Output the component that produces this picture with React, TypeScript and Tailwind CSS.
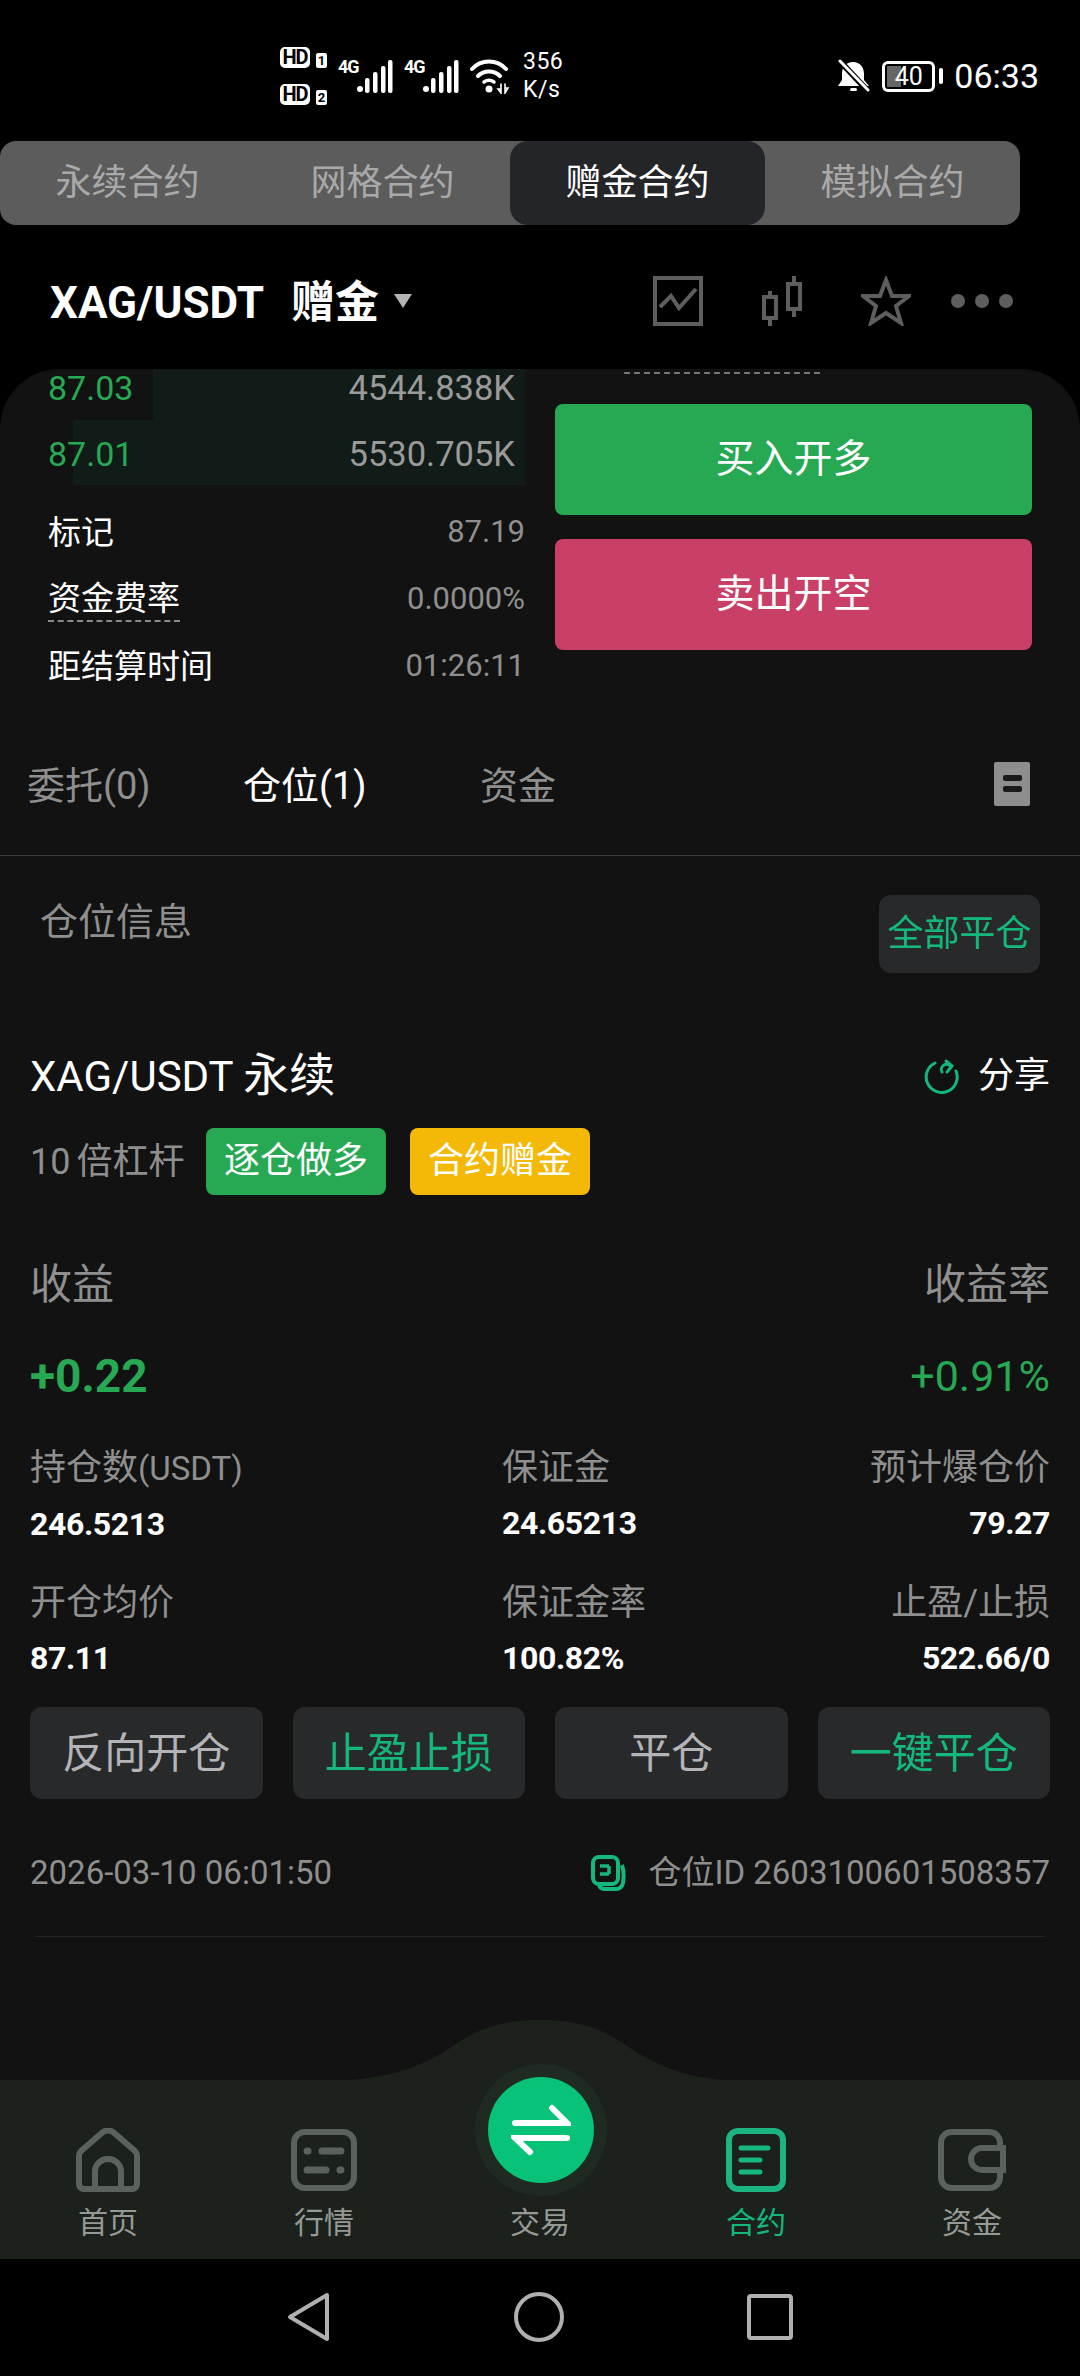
import React from "react";

const FONT = "[font-family:Roboto,'Noto_Sans_CJK_SC',sans-serif]";

const StatusLeft = () => (
  <div className="flex items-center ml-[280px]">
    <div className="flex flex-col gap-[16px] w-[58px]">
      {["1", "2"].map((n) => (
        <div key={n} className="flex items-end gap-[6px]">
          <span className="w-[30px] h-[21px] rounded-[5px] bg-white text-black text-[20px] leading-[21px] font-bold text-center tracking-[-1px]">HD</span>
          <span className="w-[11px] h-[15px] rounded-[2px] bg-white text-black text-[13px] leading-[15px] font-bold text-center">{n}</span>
        </div>
      ))}
    </div>
    <Signal />
    <Signal />
    <svg width="40" height="36" viewBox="0 0 40 36" fill="none" stroke="#fff" strokeLinecap="round">
      <path d="M2 11C11 1 27 1 36 11" strokeWidth="4" />
      <path d="M8 18C14 12 24 12 30 18" strokeWidth="4" />
      <path d="M14 24C17 22 21 22 24 24" strokeWidth="3.5" />
      <circle cx="19" cy="31" r="3.5" fill="#fff" stroke="none" />
      <path d="M31 26v9l-3-4h3M35 26v9l3-5h-3" strokeWidth="1.6" />
    </svg>
    <div className="ml-[13px] text-white text-[23px] leading-[28px] tracking-[0.5px]">
      <div>356</div>
      <div>K/s</div>
    </div>
  </div>
);

const Signal = () => (
  <div className="flex items-start w-[66px]">
    <span className="w-[19px] text-white text-[18px] leading-[15px] font-bold tracking-[-1px]">4G</span>
    <svg width="36" height="34" viewBox="0 0 36 34" fill="#fff">
      <circle cx="3" cy="30" r="3" />
      <rect x="8" y="19" width="4.5" height="15" rx="2" />
      <rect x="16" y="13" width="4.5" height="21" rx="2" />
      <rect x="24" y="7" width="4.5" height="27" rx="2" />
      <rect x="31" y="1" width="4.5" height="33" rx="2" />
    </svg>
  </div>
);

const StatusRight = () => (
  <div className="flex items-center ml-auto mr-[41px]">
    <svg width="32" height="34" viewBox="0 0 32 34" fill="#fff">
      <path d="M15 3c7 0 11 5 11 12v6l5 6H0l4-6v-6C4 8 8 3 15 3z" />
      <rect x="12" y="29" width="7" height="3" rx="1.5" />
      <path d="M0 0l29 31" stroke="#000" strokeWidth="6" />
      <path d="M2 2l28 29" stroke="#fff" strokeWidth="3" strokeLinecap="round" />
    </svg>
    <div className="ml-[12px] w-[53px] h-[31px] rounded-[6px] border-[3px] border-white relative flex items-center justify-center">
      <span className="absolute left-[2px] top-[2px] bottom-[2px] w-[14px] bg-[#666]" />
      <span className="relative text-white text-[25px] leading-none">40</span>
    </div>
    <span className="ml-[4px] w-[4px] h-[16px] rounded-full bg-white" />
    <span className="ml-[11px] text-white text-[34px] leading-none">06:33</span>
  </div>
);

const ContractTabs = () => (
  <div className="h-[84px] w-[1020px] rounded-[16px] bg-[#5c5c5c] grid grid-cols-4 text-[36px] text-[#a9a9a9]">
    <div className="flex items-center justify-center">永续合约</div>
    <div className="flex items-center justify-center">网格合约</div>
    <div className="flex items-center justify-center rounded-[18px] bg-[#242528] text-white">赠金合约</div>
    <div className="flex items-center justify-center">模拟合约</div>
  </div>
);

const TitleBar = () => (
  <div className="h-[144px] pt-[8px] flex items-center pl-[50px] pr-[67px]">
    <span className="mt-[4px] text-white text-[44px] font-bold">XAG/USDT</span>
    <span className="mt-[4px] ml-[27px] text-white text-[44px] font-bold">赠金</span>
    <span className="ml-[15px] w-0 h-0 border-x-[9px] border-x-transparent border-t-[14px] border-t-[#b4b4b4]" />
    <div className="ml-auto flex items-center">
      <svg width="50" height="50" viewBox="0 0 50 50" fill="none" stroke="#5e5e5e" strokeWidth="4">
        <rect x="2" y="2" width="46" height="46" />
        <path d="M7 31l11-11 8 12 17-19" />
      </svg>
      <svg width="42" height="50" viewBox="0 0 42 50" fill="none" stroke="#5e5e5e" strokeWidth="4" className="ml-[58px]">
        <rect x="3" y="21" width="12" height="21" />
        <path d="M9 15v6M9 42v8" />
        <rect x="27" y="8" width="12" height="25" />
        <path d="M33 0v8M33 33v8" />
      </svg>
      <svg width="50" height="50" viewBox="0 0 50 50" fill="none" stroke="#5e5e5e" strokeWidth="4" className="ml-[58px]">
        <path d="M25 4l6 16h17L35 30l5 17-15-10-15 10 5-17L2 20h17z" />
      </svg>
      <div className="ml-[40px] flex gap-[10px]">
        <span className="w-[14px] h-[14px] rounded-full bg-[#5e5e5e]" />
        <span className="w-[14px] h-[14px] rounded-full bg-[#5e5e5e]" />
        <span className="w-[14px] h-[14px] rounded-full bg-[#5e5e5e]" />
      </div>
    </div>
  </div>
);

const BookRow = ({ price, amount, bar, cls }: { price: string; amount: string; bar: string; cls: string }) => (
  <div className={`relative flex items-center justify-between pl-[48px] pr-[10px] text-[34px] ${cls}`}>
    <span className={`absolute top-0 bottom-0 right-0 bg-[#111b18] ${bar}`} />
    <span className="relative text-[#27a953]">{price}</span>
    <span className="relative text-[34.5px] text-[#9a9a9a]">{amount}</span>
  </div>
);

const StatRow = ({ label, value, dashed }: { label: string; value: string; dashed?: boolean }) => (
  <div className="h-[67px] flex items-center justify-between pl-[48px]">
    <span className={`text-[33px] leading-[42px] text-white ${dashed ? "border-b-2 border-dashed border-[#8a8a8a]" : ""}`}>{label}</span>
    <span className="text-[31px] text-[#8f8f8f]">{value}</span>
  </div>
);

const OrderSection = () => (
  <div className="h-[376px] flex">
    <div className="w-[525px]">
      <BookRow price="87.03" amount="4544.838K" bar="w-[372px]" cls="h-[51px] pb-[12px]" />
      <BookRow price="87.01" amount="5530.705K" bar="w-[452px]" cls="h-[65px] pt-[4px]" />
      <div className="mt-[14px]">
        <StatRow label="标记" value="87.19" />
        <StatRow label="资金费率" value="0.0000%" dashed />
        <StatRow label="距结算时间" value="01:26:11" />
      </div>
    </div>
    <div className="ml-[30px] w-[477px]">
      <div className="h-[35px] pt-[3px]">
        <div className="ml-[69px] w-[196px] border-t-2 border-dashed border-[#777]" />
      </div>
      <button className="w-full h-[111px] rounded-[8px] bg-[#27a953] text-white text-[39px]">买入开多</button>
      <button className="mt-[24px] w-full h-[111px] rounded-[8px] bg-[#c93f66] text-white text-[39px]">卖出开空</button>
    </div>
  </div>
);

const PositionTabs = () => (
  <div className="h-[111px] pt-[16px] pl-[27px] pr-[50px] border-b border-[#3c3c3c] flex items-start text-[38px] leading-[50px] text-[#8f8f8f]">
    <span className="w-[216px]">委托(0)</span>
    <span className="w-[237px] text-white">仓位(1)</span>
    <span>资金</span>
    <svg width="36" height="44" viewBox="0 0 36 44" className="ml-auto mt-[1px]">
      <rect width="36" height="44" rx="2" fill="#8e8e8e" />
      <rect x="9" y="13" width="19" height="6" rx="2" fill="#1a1a1a" />
      <rect x="9" y="24" width="19" height="6" rx="2" fill="#1a1a1a" />
    </svg>
  </div>
);

const Detail = ({ label, unit, value, right }: { label: string; unit?: string; value: string; right?: boolean }) => (
  <div className={right ? "text-right" : ""}>
    <div className="text-[36px] leading-[44px] text-[#8f8f8f]">
      {label}
      {unit && <span className="text-[33px]">{unit}</span>}
    </div>
    <div className="mt-[13px] text-[32px] leading-[40px] font-bold tracking-[-0.4px] text-white">{value}</div>
  </div>
);

const ActionBtn = ({ text, green }: { text: string; green?: boolean }) => (
  <button className={`h-[92px] rounded-[12px] bg-[#28292a] text-[42px] ${green ? "text-[#14b87c]" : "text-[#b4b4b8]"}`}>{text}</button>
);

const PositionCard = () => (
  <div>
    <div className="flex items-start justify-between pt-[39px] pl-[40px] pr-[40px]">
      <span className="mt-[2px] text-[38px] leading-[50px] text-[#8f8f8f]">仓位信息</span>
      <button className="w-[161px] h-[78px] rounded-[12px] bg-[#28292a] text-[36px] text-[#14b87c]">全部平仓</button>
    </div>
    <div className="px-[30px]">
      <div className="mt-[73px] h-[60px] flex items-center justify-between">
        <span className="text-[42px] leading-[60px] text-white">
          XAG/USDT <span className="text-[46px]">永续</span>
        </span>
        <div className="flex items-center">
          <svg width="36" height="36" viewBox="0 0 36 36" fill="none" stroke="#14b87c" strokeWidth="3" strokeLinecap="round">
            <path d="M11 5a15.5 15.5 0 1 0 21 8" />
            <path d="M22 3l6 5-5 6" />
            <path d="M18 14a5 5 0 0 1 9-5" />
          </svg>
          <span className="ml-[18px] text-[36px] text-white">分享</span>
        </div>
      </div>
      <div className="mt-[22px] h-[67px] flex items-center">
        <span className="w-[176px] text-[36px] text-[#8f8f8f] [word-spacing:-3px]">10 倍杠杆</span>
        <span className="w-[180px] h-[67px] rounded-[8px] bg-[#27a953] text-white text-[36px] leading-[67px] text-center">逐仓做多</span>
        <span className="ml-[24px] w-[180px] h-[67px] rounded-[8px] bg-[#f4b807] text-white text-[36px] leading-[67px] text-center">合约赠金</span>
      </div>
      <div className="mt-[65px] flex justify-between text-[42px] leading-[50px] text-[#8f8f8f]">
        <span>收益</span>
        <span>收益率</span>
      </div>
      <div className="mt-[36px] flex justify-between items-center leading-[60px] text-[#27a953]">
        <span className="text-[46px] font-bold">+0.22</span>
        <span className="text-[43px]">+0.91%</span>
      </div>
      <div className="mt-[40px] grid grid-cols-[472px_1fr_1fr] gap-y-[37px]">
        <Detail label="持仓数" unit="(USDT)" value="246.5213" />
        <Detail label="保证金" value="24.65213" />
        <Detail label="预计爆仓价" value="79.27" right />
        <Detail label="开仓均价" value="87.11" />
        <Detail label="保证金率" value="100.82%" />
        <Detail label="止盈/止损" value="522.66/0" right />
      </div>
      <div className="mt-[29px] grid grid-cols-4 gap-x-[30px]">
        <ActionBtn text="反向开仓" />
        <ActionBtn text="止盈止损" green />
        <ActionBtn text="平仓" />
        <ActionBtn text="一键平仓" green />
      </div>
      <div className="mt-[52px] flex items-center justify-between text-[33px] leading-[44px] text-[#8f8f8f]">
        <span>2026-03-10 06:01:50</span>
        <div className="flex items-center">
          <svg width="35" height="36" viewBox="0 0 35 36" fill="none" stroke="#14b87c" strokeWidth="4">
            <rect x="2" y="2" width="25" height="27" rx="6" />
            <path d="M31 10c2 6 2 12 1 18-1 4-3 6-7 6H14c-3 0-5-1-6-4" />
            <path d="M9 11h9M9 19h9M18 11v8" strokeWidth="3.5" />
          </svg>
          <span className="ml-[22px]">仓位ID 2603100601508357</span>
        </div>
      </div>
    </div>
    <div className="mt-[41px] mx-[35px] border-t border-[#232425]" />
  </div>
);

const HomeIcon = () => (
  <svg width="64" height="64" viewBox="0 0 64 64" fill="none" stroke="#5b625b" strokeWidth="6" strokeLinejoin="round">
    <path d="M3 28c0-2 1-4 2-5L27 4c3-2 7-2 10 0l22 19c1 1 2 3 2 5v28c0 3-2 5-5 5H8c-3 0-5-2-5-5z" />
    <path d="M19 61V44c0-8 6-13 13-13s13 5 13 13v17" />
  </svg>
);

const MarketIcon = () => (
  <svg width="66" height="62" viewBox="0 0 66 62" fill="none" stroke="#5b625b" strokeWidth="6">
    <rect x="3" y="3" width="60" height="56" rx="11" />
    <g strokeLinecap="round" strokeWidth="7">
      <path d="M16 22h1M31 22h19M16 41h19M49 41h1" />
    </g>
  </svg>
);

const ContractIcon = () => (
  <svg width="60" height="64" viewBox="0 0 60 64" fill="none" stroke="#14b87c" strokeWidth="6">
    <rect x="3" y="3" width="54" height="58" rx="9" stroke="#1cb480" />
    <g strokeLinecap="round" strokeWidth="5">
      <path d="M15 20h27M15 32h19M15 44h19" />
    </g>
  </svg>
);

const WalletIcon = () => (
  <svg width="68" height="62" viewBox="0 0 68 62" fill="none" stroke="#5b625b" strokeWidth="6">
    <path d="M62 19V14c0-6-4-11-11-11H14C7 3 3 8 3 14v34c0 6 4 11 11 11h37c7 0 11-5 11-11v-7" />
    <path d="M65 19H44c-6 0-11 5-11 11s5 11 11 11h21z" />
  </svg>
);

const NavItem = ({ label, active, children }: { label: string; active?: boolean; children?: React.ReactNode }) => (
  <div className="flex flex-col items-center pt-[48px]">
    <div className="h-[64px] flex items-center">{children}</div>
    <span className={`mt-[11px] text-[30px] leading-[40px] ${active ? "text-[#14b87c]" : "text-[#959a95]"}`}>{label}</span>
  </div>
);

const BottomNav = () => (
  <div className="relative h-[179px] bg-[#1c211c]">
    <svg width="1080" height="61" viewBox="0 0 1080 61" className="absolute left-0 top-[-60px]" fill="#1c211c">
      <path d="M320 61C395 61 425 45 462 20C490 2 520 0 540 0C560 0 590 2 618 20C655 45 685 61 750 61Z" />
    </svg>
    <div className="absolute left-[475px] top-[-16px] w-[132px] h-[132px] rounded-full bg-[#1f2a22] flex items-center justify-center">
      <div className="w-[106px] h-[106px] rounded-full bg-[#07c277] flex items-center justify-center">
        <svg width="60" height="52" viewBox="0 0 60 52" fill="none" stroke="#fff" strokeWidth="6" strokeLinecap="round">
          <path d="M4 19h52L41 4" />
          <path d="M56 34H4l15 14" />
        </svg>
      </div>
    </div>
    <div className="grid grid-cols-5">
      <NavItem label="首页"><HomeIcon /></NavItem>
      <NavItem label="行情"><MarketIcon /></NavItem>
      <NavItem label="交易" />
      <NavItem label="合约" active><ContractIcon /></NavItem>
      <NavItem label="资金"><WalletIcon /></NavItem>
    </div>
  </div>
);

const SystemBar = () => (
  <div className="flex-1 bg-black flex items-center justify-center pb-[1px]">
    <svg width="44" height="50" viewBox="0 0 44 50" fill="none" stroke="#b0b0b0" strokeWidth="4" strokeLinejoin="round">
      <path d="M40 3L3 25l37 22z" />
    </svg>
    <svg width="50" height="50" viewBox="0 0 50 50" fill="none" stroke="#b0b0b0" strokeWidth="4" className="ml-[183px]">
      <circle cx="25" cy="25" r="23" />
    </svg>
    <svg width="46" height="46" viewBox="0 0 46 46" fill="none" stroke="#b0b0b0" strokeWidth="4" className="ml-[183px]">
      <rect x="2" y="2" width="42" height="42" rx="2" />
    </svg>
  </div>
);

export default function App() {
  return (
    <div className={`w-[1080px] h-[2376px] bg-black flex flex-col overflow-hidden ${FONT}`}>
      <div className="h-[141px] pt-[11px] flex items-center">
        <StatusLeft />
        <StatusRight />
      </div>
      <ContractTabs />
      <TitleBar />
      <div className="flex-1 rounded-t-[60px] bg-[#121212] overflow-hidden">
        <OrderSection />
        <PositionTabs />
        <PositionCard />
      </div>
      <BottomNav />
      <div className="h-[117px] flex">
        <SystemBar />
      </div>
    </div>
  );
}
